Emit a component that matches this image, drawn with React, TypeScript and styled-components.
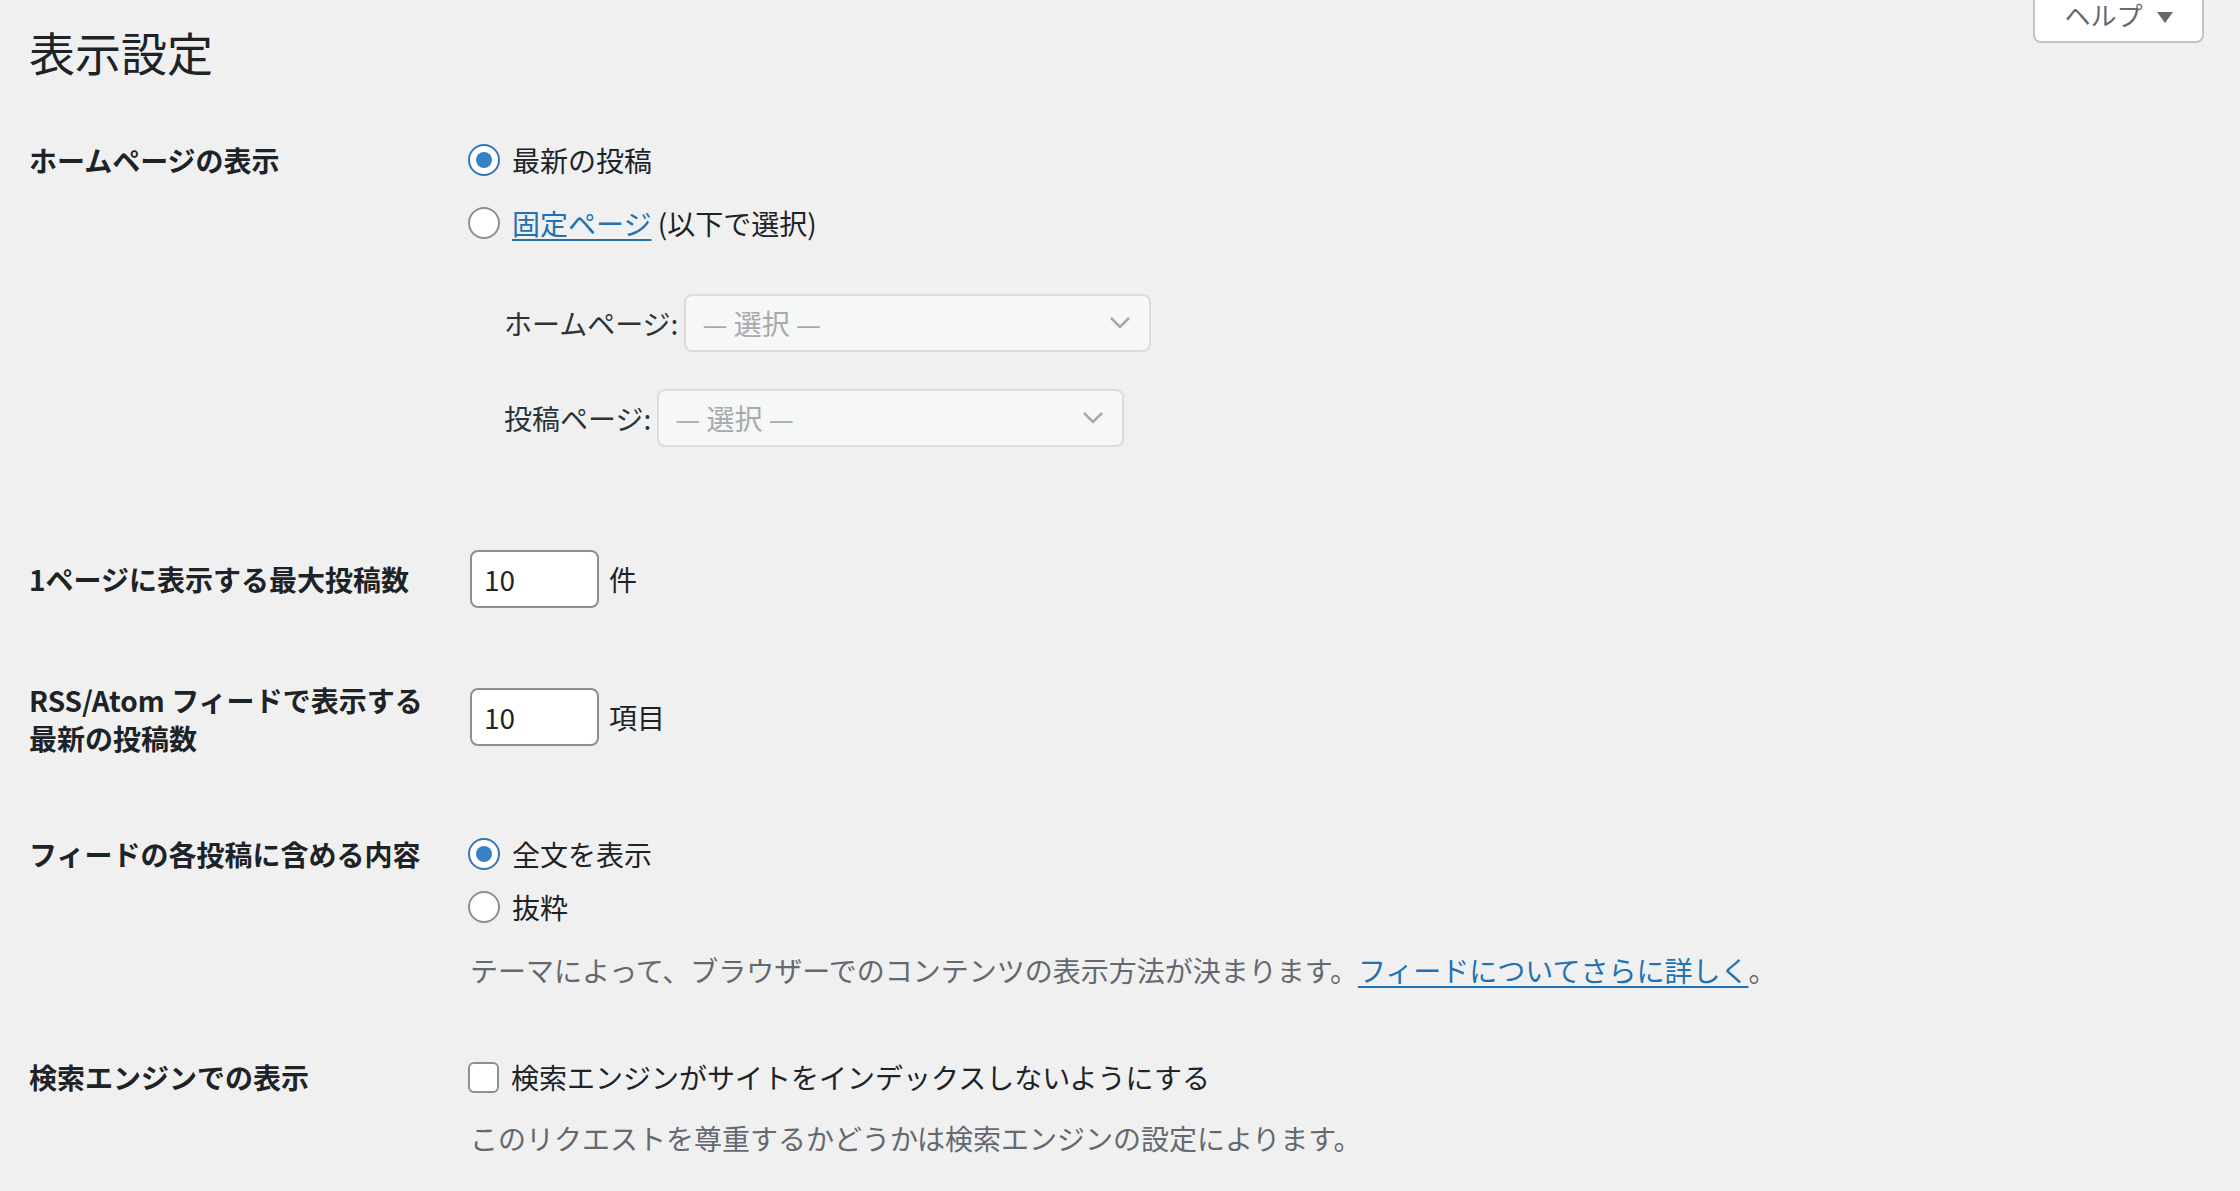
import React from "react";
import styled, { createGlobalStyle } from "styled-components";

const GlobalStyle = createGlobalStyle`
  html, body {
    margin: 0;
    background: #f0f0f1;
    font-family: "Noto Sans CJK JP", "Noto Sans", sans-serif;
    color: #1d2327;
  }
`;

const Wrap = styled.div`
  position: relative;
  padding: 21px 0 40px 29px;
  min-height: 1191px;
  box-sizing: border-box;
`;

const Title = styled.h1`
  margin: 0;
  font-size: 46px;
  font-weight: 400;
  line-height: 60px;
`;

const HelpButton = styled.button`
  position: absolute;
  top: -17px;
  right: 36px;
  width: 171px;
  height: 60px;
  background: #fff;
  border: 2px solid #c3c4c7;
  border-top: none;
  border-radius: 0 0 8px 8px;
  font-family: inherit;
  font-size: 26px;
  color: #646970;
  display: flex;
  align-items: flex-end;
  justify-content: center;
  gap: 14px;
  padding-bottom: 8px;
  box-sizing: border-box;
`;

const Caret = styled.span`
  width: 0;
  height: 0;
  border-left: 8px solid transparent;
  border-right: 8px solid transparent;
  border-top: 11px solid #646970;
  margin-bottom: 10px;
`;

const Row = styled.div<{ $top: number }>`
  display: grid;
  grid-template-columns: 441px 1fr;
  margin-top: ${(p) => p.$top}px;
`;

const Label = styled.div`
  font-size: 28px;
  font-weight: 700;
  line-height: 38px;
`;

const Field = styled.div<{ $pad?: number }>`
  padding-top: ${(p) => p.$pad ?? 0}px;
  display: flex;
  flex-direction: column;
  align-items: flex-start;
`;

const Choice = styled.label<{ $gap?: number }>`
  display: flex;
  align-items: center;
  gap: 12px;
  font-size: 28px;
  line-height: 38px;
  height: 38px;
  margin-top: ${(p) => p.$gap ?? 0}px;
`;

const Radio = styled.span<{ $on?: boolean }>`
  width: 32px;
  height: 32px;
  box-sizing: border-box;
  border-radius: 50%;
  background: #fff;
  border: 2px solid ${(p) => (p.$on ? "#3a74b8" : "#8c8f94")};
  display: flex;
  align-items: center;
  justify-content: center;
  margin-left: -2px;
  &::after {
    content: "";
    width: 16px;
    height: 16px;
    border-radius: 50%;
    background: ${(p) => (p.$on ? "#3582c4" : "transparent")};
  }
`;

const Box = styled.span`
  width: 31px;
  height: 31px;
  box-sizing: border-box;
  border-radius: 6px;
  background: #fff;
  border: 2px solid #8c8f94;
  margin-left: -2px;
`;

const Link = styled.a`
  color: #2271b1;
  text-decoration: underline;
  text-underline-offset: 4px;
`;

const SelectLine = styled.div<{ $gap: number }>`
  display: flex;
  align-items: center;
  gap: 6px;
  margin-left: 34px;
  margin-top: ${(p) => p.$gap}px;
  font-size: 28px;
  color: #2c3338;
`;

const FakeSelect = styled.div`
  width: 467px;
  height: 58px;
  box-sizing: border-box;
  background: #f6f7f7;
  border: 2px solid #dcdcde;
  border-radius: 8px;
  display: flex;
  align-items: center;
  justify-content: space-between;
  padding: 0 18px 0 16px;
  color: #a7aaad;
  font-size: 28px;
`;

const NumberLine = styled.div`
  display: flex;
  align-items: center;
  gap: 10px;
  font-size: 28px;
`;

const NumInput = styled.div`
  width: 129px;
  height: 58px;
  box-sizing: border-box;
  background: #fff;
  border: 2px solid #8c8f94;
  border-radius: 8px;
  display: flex;
  align-items: center;
  padding-left: 12px;
  font-size: 28px;
  color: #1d2327;
`;

const Desc = styled.p<{ $gap: number }>`
  margin: ${(p) => p.$gap}px 0 0;
  font-size: 28px;
  line-height: 38px;
  color: #646970;
`;

const Chevron = () => (
  <svg width="22" height="14" viewBox="0 0 22 14" fill="none">
    <path d="M2 2l9 9 9-9" stroke="#a7aaad" strokeWidth="2.6" />
  </svg>
);

export default function App() {
  return (
    <Wrap>
      <GlobalStyle />
      <HelpButton>
        ヘルプ <Caret />
      </HelpButton>
      <Title>表示設定</Title>

      <Row $top={60}>
        <Label>ホームページの表示</Label>
        <Field>
          <Choice>
            <Radio $on /> 最新の投稿
          </Choice>
          <Choice $gap={25}>
            <Radio />
            <span>
              <Link>固定ページ</Link> (以下で選択)
            </span>
          </Choice>
          <SelectLine $gap={52}>
            ホームページ:
            <FakeSelect>
              — 選択 —<Chevron />
            </FakeSelect>
          </SelectLine>
          <SelectLine $gap={37}>
            投稿ページ:
            <FakeSelect>
              — 選択 —<Chevron />
            </FakeSelect>
          </SelectLine>
        </Field>
      </Row>

      <Row $top={103}>
        <Label style={{ paddingTop: 10 }}>1ページに表示する最大投稿数</Label>
        <Field>
          <NumberLine>
            <NumInput>10</NumInput>件
          </NumberLine>
        </Field>
      </Row>

      <Row $top={73}>
        <Label>
          RSS/Atom フィードで表示する
          <br />
          最新の投稿数
        </Label>
        <Field $pad={7}>
          <NumberLine>
            <NumInput>10</NumInput>項目
          </NumberLine>
        </Field>
      </Row>

      <Row $top={78}>
        <Label>フィードの各投稿に含める内容</Label>
        <Field>
          <Choice>
            <Radio $on /> 全文を表示
          </Choice>
          <Choice $gap={15}>
            <Radio /> 抜粋
          </Choice>
          <Desc $gap={25}>
            テーマによって、ブラウザーでのコンテンツの表示方法が決まります。
            <Link>フィードについてさらに詳しく</Link>。
          </Desc>
        </Field>
      </Row>

      <Row $top={69}>
        <Label>検索エンジンでの表示</Label>
        <Field>
          <Choice>
            <Box /> 検索エンジンがサイトをインデックスしないようにする
          </Choice>
          <Desc $gap={23}>
            このリクエストを尊重するかどうかは検索エンジンの設定によります。
          </Desc>
        </Field>
      </Row>
    </Wrap>
  );
}
